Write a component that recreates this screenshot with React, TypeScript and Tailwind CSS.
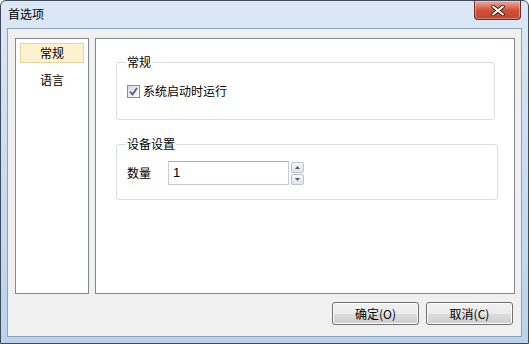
import React from 'react'

const font = { fontFamily: '"Noto Sans CJK SC", "Noto Sans", sans-serif' }

function CloseButton() {
  return (
    <div className="mr-[7px] flex h-[19px] w-[47px] items-center justify-center rounded-b-[4px] border border-t-0 border-[#6b2a22] bg-gradient-to-b from-[#e9a99c] via-[#d2513c] to-[#c4442e] shadow-[inset_0_0_0_1px_rgba(255,255,255,0.35)]">
      <svg width="14" height="11" viewBox="0 0 14 11">
        <path d="M2 1.5 L12 9.5 M12 1.5 L2 9.5" stroke="#3b1b16" strokeWidth="3.6" strokeLinecap="round" />
        <path d="M2 1.5 L12 9.5 M12 1.5 L2 9.5" stroke="#ffffff" strokeWidth="2" strokeLinecap="round" />
      </svg>
    </div>
  )
}

function Checkbox() {
  return (
    <div className="flex h-[13px] w-[13px] items-center justify-center border border-[#8e8f8f] bg-gradient-to-br from-[#dcdcdc] to-[#fbfbfb]">
      <svg width="9" height="9" viewBox="0 0 9 9">
        <path d="M1 4.5 L3.5 7.5 L8 1" fill="none" stroke="#4a5f97" strokeWidth="1.8" />
      </svg>
    </div>
  )
}

function WinButton({ label }: { label: string }) {
  return (
    <button className="h-[23px] w-[87px] rounded-[3px] border border-[#707070] bg-[linear-gradient(#f2f2f2_0%,#ebebeb_50%,#dddddd_51%,#cfcfcf_100%)] text-[12px] text-black shadow-[inset_0_0_0_1px_#fcfcfc]">
      {label}
    </button>
  )
}

function SpinArrow({ up }: { up?: boolean }) {
  return (
    <div className="flex h-[11px] w-[13px] items-center justify-center rounded-[2px] border border-[#b9c3cc] bg-gradient-to-b from-[#f6f6f6] to-[#e4e4e4]">
      <svg width="5" height="3" viewBox="0 0 5 3">
        {up ? <path d="M0 3 L2.5 0 L5 3 Z" fill="#4d5a7a" /> : <path d="M0 0 L2.5 3 L5 0 Z" fill="#4d5a7a" />}
      </svg>
    </div>
  )
}

export default function App() {
  return (
    <div
      className="flex h-[344px] w-[529px] flex-col overflow-hidden rounded-t-[6px] border border-[#3c4a5c] bg-gradient-to-b from-[#dce8f5] via-[#cadcf0] to-[#bcd3ec] text-[12px] text-black"
      style={font}
    >
      <div className="flex h-[27px] items-start justify-between">
        <span className="pl-[7px] pt-[5px] leading-[16px]">首选项</span>
        <CloseButton />
      </div>
      <div className="mx-[6px] mb-[6px] flex flex-1 flex-col border border-[#8ea3bb] bg-[#f0f0f0]">
        <div className="flex flex-1 gap-[6px] pl-[7px] pr-[6px] pt-[9px]">
          <div className="flex h-[256px] w-[74px] flex-col items-stretch border border-[#828790] bg-white px-[4px] pt-[4px]">
            <div className="flex h-[20px] items-center justify-center border border-[#e6d49e] bg-[#fdf2cf]">常规</div>
            <div className="mt-[7px] flex h-[20px] items-center justify-center">语言</div>
          </div>
          <div className="flex h-[256px] flex-1 flex-col border border-[#828790] bg-white pl-[20px] pt-[16px]">
            <fieldset className="mr-[19px] h-[65px] rounded-[3px] border border-[#d5dfe5] px-[9px]">
              <legend className="px-[1px] leading-[14px]">常规</legend>
              <div className="mt-[13px] flex items-center gap-[3px] pl-[1px]">
                <Checkbox />
                <span>系统启动时运行</span>
              </div>
            </fieldset>
            <fieldset className="mr-[16px] mt-[17px] h-[63px] rounded-[3px] border border-[#d5dfe5] px-[9px]">
              <legend className="px-[1px] leading-[14px]">设备设置</legend>
              <div className="mt-[10px] flex items-center">
                <span className="w-[42px] pl-[1px]">数量</span>
                <div className="flex h-[24px] w-[121px] items-center border border-[#c5cdd4] border-t-[#abadb3] pl-[4px] text-[13px]" style={{ fontFamily: '"Liberation Sans", sans-serif' }}>
                  1
                </div>
                <div className="ml-[2px] flex flex-col gap-[1px]">
                  <SpinArrow up />
                  <SpinArrow />
                </div>
              </div>
            </fieldset>
          </div>
        </div>
        <div className="flex justify-end gap-[7px] pb-[11px] pr-[8px]">
          <WinButton label="确定(O)" />
          <WinButton label="取消(C)" />
        </div>
      </div>
    </div>
  )
}
